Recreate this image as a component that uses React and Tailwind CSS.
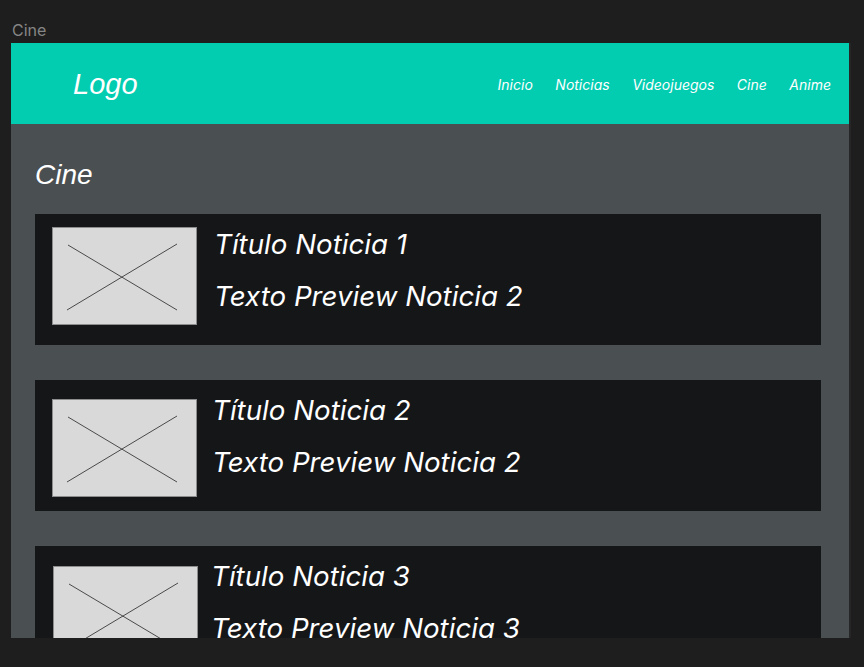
import React from 'react';

const links = ['Inicio', 'Noticias', 'Videojuegos', 'Cine', 'Anime'];

const news = [
  { id: 1, title: 'Título Noticia 1', preview: 'Texto Preview Noticia 2', imgClass: 'mt-[13px] ml-[17px]', gap: 'gap-[17px]' },
  { id: 2, title: 'Título Noticia 2', preview: 'Texto Preview Noticia 2', imgClass: 'mt-[19px] ml-[17px]', gap: 'gap-[15px]' },
  { id: 3, title: 'Título Noticia 3', preview: 'Texto Preview Noticia 3', imgClass: 'mt-[20px] ml-[18px]', gap: 'gap-[13px]' },
];

function Placeholder({ className }) {
  return (
    <div className={`h-[98px] w-[145px] shrink-0 border border-[#8d8d8d] bg-[#d9d9d9] ${className}`}>
      <svg width="143" height="96" viewBox="0 0 143 96" className="block">
        <line x1="15" y1="17" x2="124" y2="82" stroke="#3a3a3a" strokeWidth="0.9" />
        <line x1="14" y1="82" x2="124" y2="16" stroke="#3a3a3a" strokeWidth="0.9" />
      </svg>
    </div>
  );
}

function NewsCard({ item }) {
  return (
    <article className={`flex h-[131px] shrink-0 items-start bg-[#151618] ${item.gap}`}>
      <Placeholder className={item.imgClass} />
      <div className="flex flex-col gap-[19px] pt-[14px] font-['Inter',sans-serif] text-[27.7px] italic leading-[33px] text-white">
        <h2>{item.title}</h2>
        <p>{item.preview}</p>
      </div>
    </article>
  );
}

export default function App() {
  return (
    <div className="h-[667px] w-full overflow-hidden bg-[#1e1e1e]">
      <div className="ml-[12px] pt-[21px] font-['Inter',sans-serif] text-[16px] leading-[19px] text-[#858585]">Cine</div>

      <div className="ml-[11px] mt-[3px] flex h-[595px] w-[838px] flex-col overflow-hidden shadow-[2px_0_0_#262626]">
        <header className="flex h-[81px] shrink-0 items-center justify-between bg-[#02cdb1] pl-[62px] pr-[18px]">
          <span className="font-['Liberation_Sans',Arial,sans-serif] text-[29px] italic leading-[32px] text-white">Logo</span>
          <nav className="flex gap-[22.5px] pt-[2px] font-['Inter',sans-serif] text-[14px] italic text-white">
            {links.map((link) => (
              <a key={link} href="#">{link}</a>
            ))}
          </nav>
        </header>

        <main className="flex flex-1 flex-col bg-[#4a4f52] pl-[24px] pr-[28px] pt-[35px]">
          <h1 className="mb-[23px] font-['Liberation_Sans',Arial,sans-serif] text-[28px] italic leading-[32px] text-white">Cine</h1>
          <div className="flex flex-col gap-[35px]">
            {news.map((item) => (
              <NewsCard key={item.id} item={item} />
            ))}
          </div>
        </main>
      </div>
    </div>
  );
}
